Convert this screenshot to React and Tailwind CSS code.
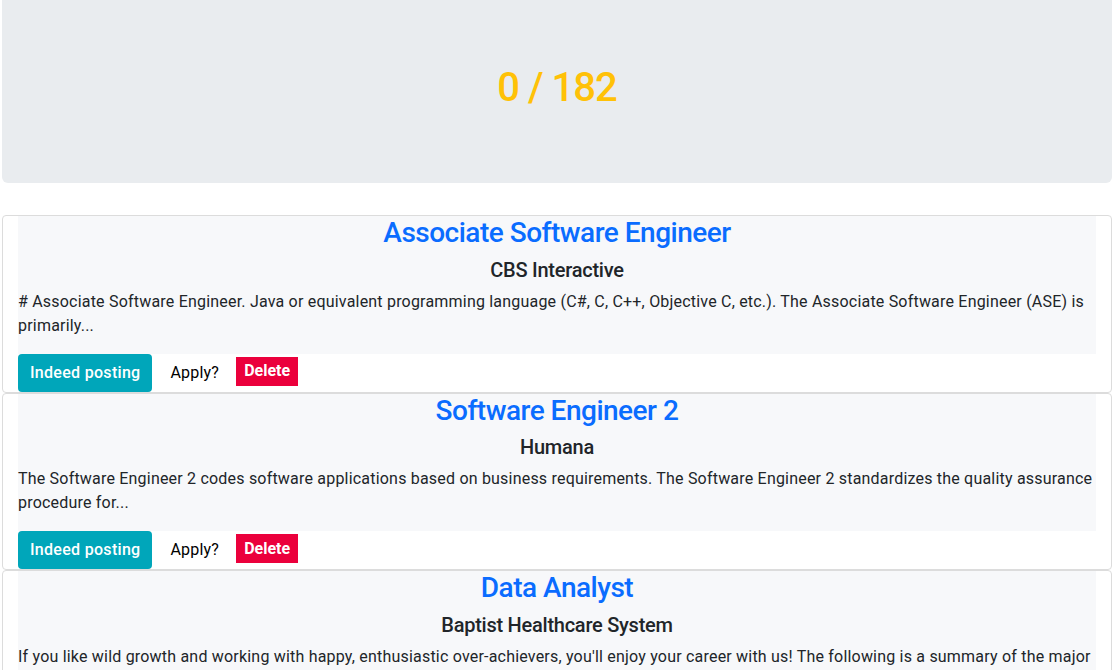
const jobs = [
  {
    title: "Associate Software Engineer",
    company: "CBS Interactive",
    summary:
      "# Associate Software Engineer. Java or equivalent programming language (C#, C, C++, Objective C, etc.). The Associate Software Engineer (ASE) is primarily...",
  },
  {
    title: "Software Engineer 2",
    company: "Humana",
    summary:
      "The Software Engineer 2 codes software applications based on business requirements. The Software Engineer 2 standardizes the quality assurance procedure for...",
  },
  {
    title: "Data Analyst",
    company: "Baptist Healthcare System",
    summary:
      "If you like wild growth and working with happy, enthusiastic over-achievers, you'll enjoy your career with us! The following is a summary of the major essential functions...",
  },
];

function JobCard({ job }) {
  return (
    <div className="border border-[#dcdcdc] rounded-[4px] px-[15px]">
      <div className="bg-[#f7f8fa] pb-4">
        <h2 className="text-center text-[28px] leading-[1.2] font-medium tracking-[-0.5px] text-[#0a6cff] mb-2">
          {job.title}
        </h2>
        <h5 className="text-center text-[20px] leading-[1.2] font-medium tracking-[-0.25px] text-[#212529] mb-2">
          {job.company}
        </h5>
        <p className="text-[16px] leading-6 tracking-[0.2px] text-[#212529]">{job.summary}</p>
      </div>
      <div className="flex items-center h-[38px]">
        <button className="h-[38px] px-3 rounded-[4px] bg-[#00a6ba] text-white text-[16px] font-medium tracking-[0.3px]">
          Indeed posting
        </button>
        <span className="ml-[18px] text-[16px] tracking-[0.2px] text-black">Apply?</span>
        <span className="ml-[17px] bg-[#eb003c] text-white text-[16px] font-bold px-2 h-[29px] flex items-center -mt-[3px]">
          Delete
        </span>
      </div>
    </div>
  );
}

export default function App() {
  return (
    <div
      className="pl-[2px] pr-[3px] bg-white min-h-screen"
      style={{ fontFamily: "Roboto, 'Noto Sans', sans-serif" }}
    >
      <div className="bg-[#e9ecef] rounded-b-[6px] h-[183px] flex items-center justify-center mb-8">
        <span className="text-[#ffc107] text-[40px] font-medium leading-none tracking-[-1px] -mt-[8px]">
          0 / 182
        </span>
      </div>
      <div className="flex flex-col">
        {jobs.map((job) => (
          <JobCard key={job.title} job={job} />
        ))}
      </div>
    </div>
  );
}
